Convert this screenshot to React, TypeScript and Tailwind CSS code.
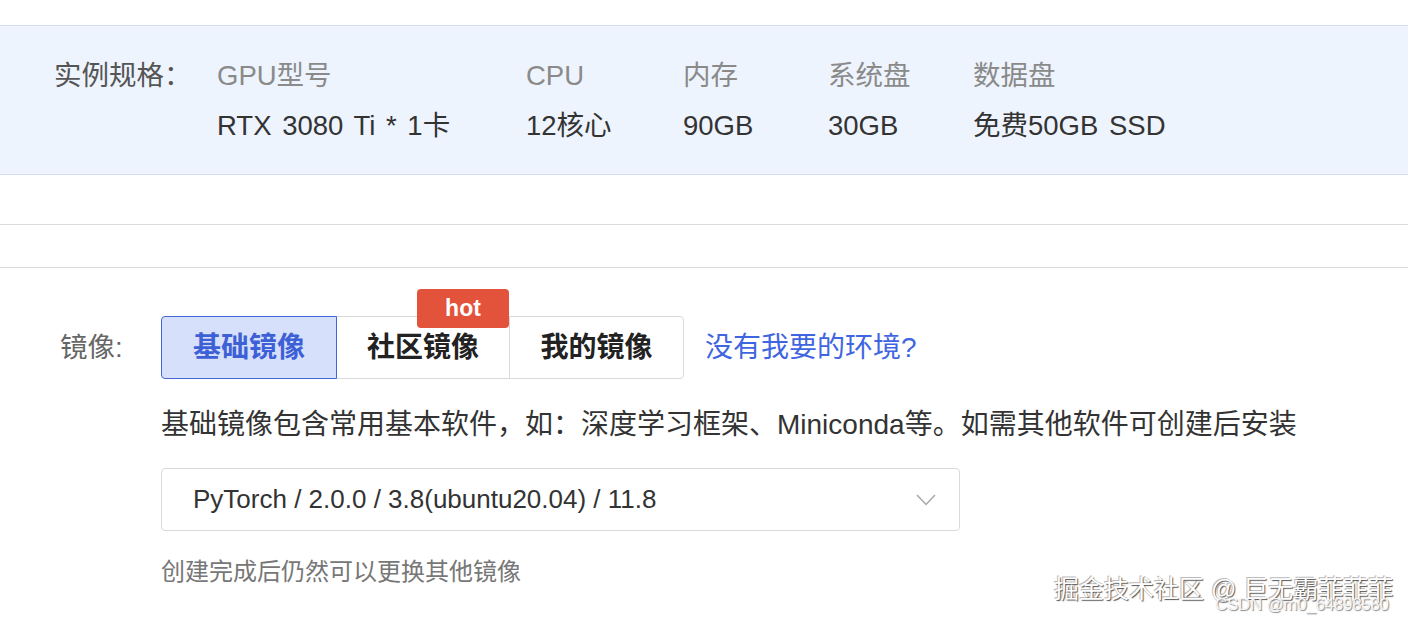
import React from "react";

export default function App() {
  return (
    <div className="relative w-[1408px] h-[622px] overflow-hidden bg-white font-['Liberation_Sans','Noto_Sans_CJK_SC',sans-serif]">
      <div className="h-[25px]" />
      {/* spec band */}
      <div className="border-y border-[#d3def3] bg-[#eef4fd] pl-[54px] pt-[30px] pb-[28px] flex text-[27.5px]">
        <div className="w-[163px] leading-[40px] text-[#555]">实例规格：</div>
        {[
          ["GPU型号", "RTX 3080 Ti * 1卡", "w-[309px]"],
          ["CPU", "12核心", "w-[157px]"],
          ["内存", "90GB", "w-[145px]"],
          ["系统盘", "30GB", "w-[145px]"],
          ["数据盘", "免费50GB SSD", "w-[250px]"],
        ].map(([h, v, w]) => (
          <div key={h} className={`${w} flex flex-col gap-[10px]`}>
            <div className="leading-[40px] text-[#8a8a8a]">{h}</div>
            <div className="leading-[40px] text-[#333] [word-spacing:3px]">{v}</div>
          </div>
        ))}
      </div>
      <div className="mt-[49px] h-[44px] border-y border-[#dcdcdc]" />

      {/* image section */}
      <div className="mt-[48px] pl-[60px] flex items-center">
        <div className="w-[101px] text-[27.5px] text-[#666] leading-[40px]">镜像:</div>
        <div className="flex">
          <button className="relative z-10 w-[176px] h-[63px] rounded-l-[4px] border border-[#4466d6] bg-[#d7e0fb] text-[28px] font-bold text-[#3d60d6]">
            基础镜像
          </button>
          <button className="relative -ml-px w-[174px] h-[63px] border border-[#d9d9d9] bg-white text-[28px] font-bold text-[#222]">
            社区镜像
            <span className="absolute left-[80px] top-[-28px] w-[92px] h-[39px] rounded-[4px] bg-[#e3523b] text-white text-[23px] font-semibold leading-[38px] text-center">
              hot
            </span>
          </button>
          <button className="relative -ml-px w-[175px] h-[63px] rounded-r-[4px] border border-[#d9d9d9] bg-white text-[28px] font-bold text-[#222]">
            我的镜像
          </button>
        </div>
        <a className="ml-[21px] text-[28px] text-[#3f66e0] leading-[40px]">没有我要的环境?</a>
      </div>

      <div className="pl-[161px]">
        <div className="mt-[26px] text-[28px] leading-[40px] text-[#333]">
          基础镜像包含常用基本软件，如：深度学习框架、Miniconda等。如需其他软件可创建后安装
        </div>
        <div className="mt-[23px] w-[799px] h-[63px] rounded-[4px] border border-[#d9d9d9] flex items-center pl-[31px] pr-[23px]">
          <span className="flex-1 text-[26px] text-[#333]">PyTorch / 2.0.0 / 3.8(ubuntu20.04) / 11.8</span>
          <svg width="20" height="12" viewBox="0 0 20 12" fill="none">
            <polyline points="1,1 10,10.5 19,1" stroke="#a8a8a8" strokeWidth="1.5" />
          </svg>
        </div>
        <div className="mt-[25px] text-[24px] leading-[32px] text-[#777]">创建完成后仍然可以更换其他镜像</div>
      </div>

      {/* watermark */}
      <div className="absolute left-[1054px] top-[572px] text-[25px] leading-[34px] text-white [text-shadow:1px_1px_1px_#555,-1px_-1px_0_#bbb] whitespace-nowrap">
        掘金技术社区 @ 巨无霸菲菲菲
      </div>
      <div className="absolute left-[1215px] top-[594px] text-[17px] leading-[22px] tracking-[-0.3px] text-[#f4f4f4] [text-shadow:1px_1px_1px_#888] whitespace-nowrap">
        CSDN @m0_64898580
      </div>
    </div>
  );
}
